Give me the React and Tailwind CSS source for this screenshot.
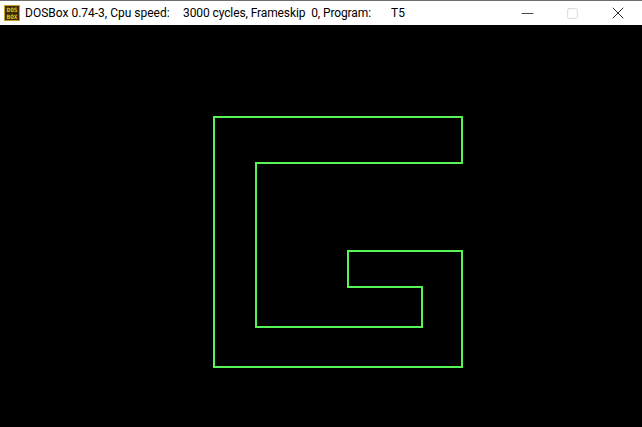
import { Minus, Square, X } from 'lucide-react';

const DosIcon = () => (
  <svg width="16" height="16" viewBox="0 0 16 16">
    <rect x="0.5" y="0.5" width="15" height="15" fill="#3b2a0c" stroke="#c9a227" />
    <text x="8" y="7" textAnchor="middle" fontSize="6" fontWeight="bold" fill="#f5c518" fontFamily="DejaVu Sans Mono, monospace">DOS</text>
    <text x="8" y="13.5" textAnchor="middle" fontSize="6" fontWeight="bold" fill="#f5c518" fontFamily="DejaVu Sans Mono, monospace">BOX</text>
  </svg>
);

const App = () => {
  return (
    <div className="w-[642px] h-[427px] flex flex-col bg-black overflow-hidden" style={{ fontFamily: 'Roboto, "Noto Sans", sans-serif' }}>
      {/* title bar */}
      <div className="h-[25px] shrink-0 bg-white border-t border-[#707070] flex items-center text-[12px] text-black">
        <div className="w-[25px] shrink-0 pl-[4px] flex items-center">
          <DosIcon />
        </div>
        <span className="w-[158px] shrink-0 whitespace-pre">DOSBox 0.74-3, Cpu speed:</span>
        <span className="w-[208px] shrink-0 whitespace-pre tracking-[-0.1px]">3000 cycles, Frameskip  0, Program:</span>
        <span className="whitespace-pre">T5</span>
        <div className="ml-auto flex items-center h-full pr-[1px]">
          <div className="w-[44px] h-full flex items-center justify-center">
            <Minus size={19} strokeWidth={0.9} color="#000" />
          </div>
          <div className="w-[46px] h-full flex items-center justify-center">
            <Square size={13} strokeWidth={1.3} color="#cccccc" />
          </div>
          <div className="w-[46px] h-full flex items-center justify-center">
            <X size={20} strokeWidth={1} color="#000" />
          </div>
        </div>
      </div>
      {/* screen */}
      <div className="flex-1 bg-black">
        <svg width="642" height="402" viewBox="0 0 642 402" shapeRendering="crispEdges">
          <polygon
            points="214,92 462,92 462,138 256,138 256,302 422,302 422,262 348,262 348,226 462,226 462,342 214,342"
            fill="none"
            stroke="#57f357"
            strokeWidth="2"
          />
        </svg>
      </div>
    </div>
  );
};

export default App;
